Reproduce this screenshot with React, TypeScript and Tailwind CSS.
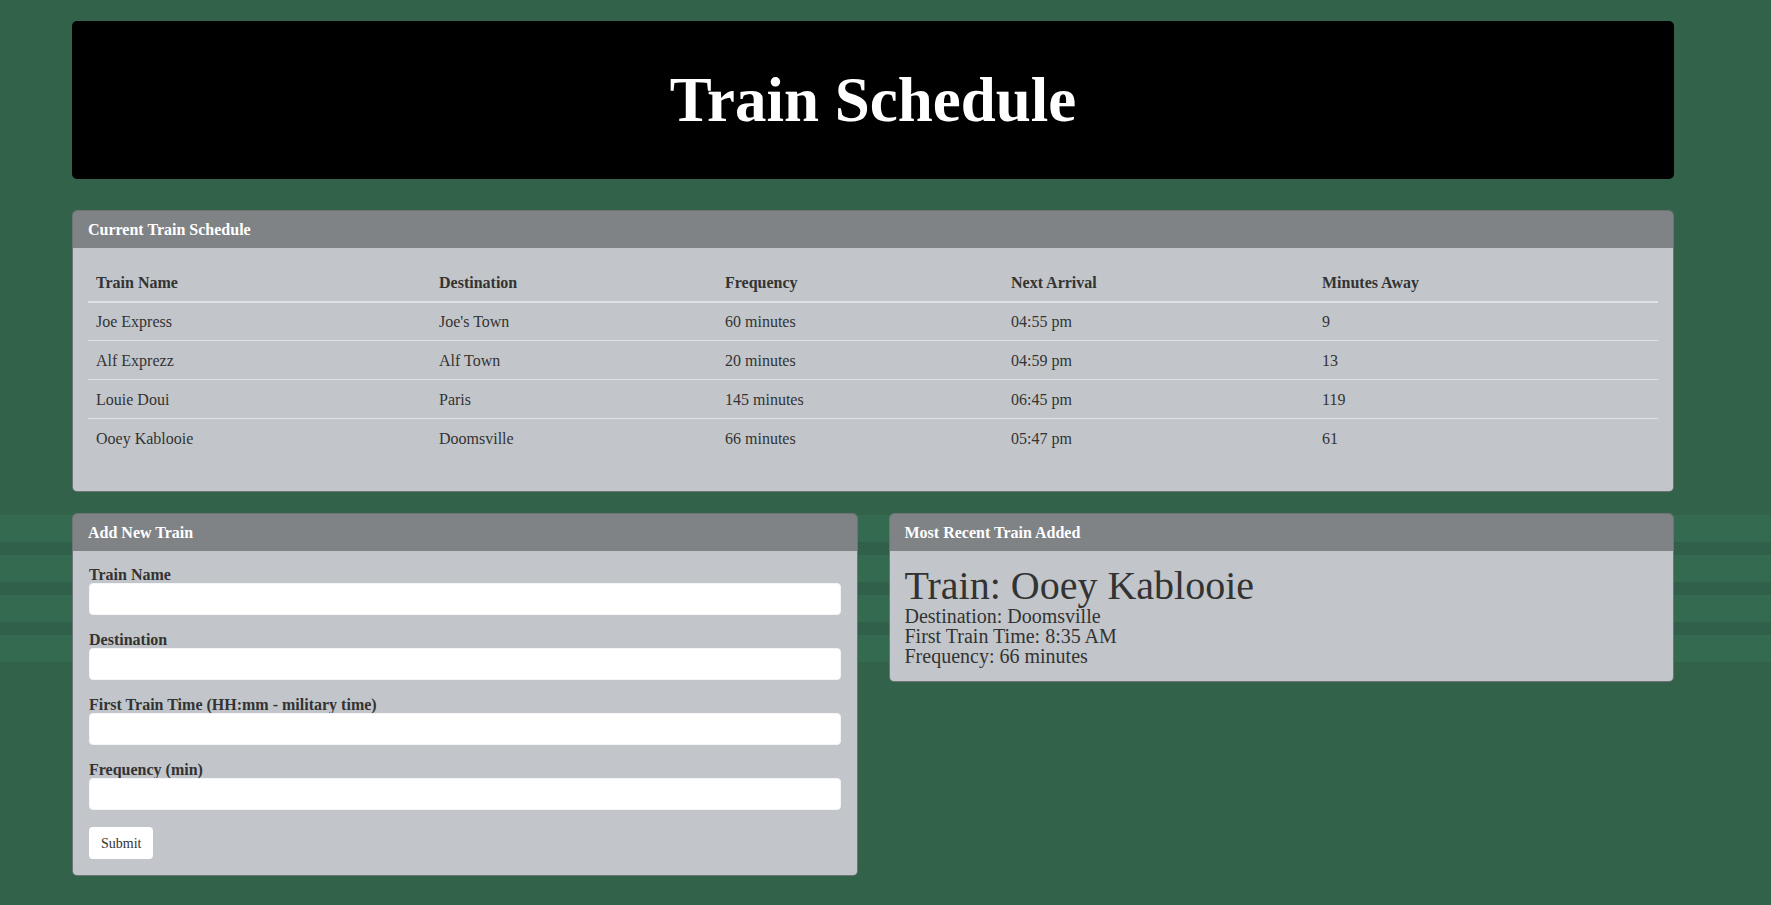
import React from "react";

const rows = [
  ["Joe Express", "Joe's Town", "60 minutes", "04:55 pm", "9"],
  ["Alf Exprezz", "Alf Town", "20 minutes", "04:59 pm", "13"],
  ["Louie Doui", "Paris", "145 minutes", "06:45 pm", "119"],
  ["Ooey Kablooie", "Doomsville", "66 minutes", "05:47 pm", "61"],
];

const fields = [
  "Train Name",
  "Destination",
  "First Train Time (HH:mm - military time)",
  "Frequency (min)",
];

function CardHeader({ title }: { title: string }) {
  return (
    <div className="h-[37px] flex items-center px-[15px] bg-[#7f8386] text-white font-bold text-[16px] leading-none rounded-t-[4px]">
      {title}
    </div>
  );
}

export default function App() {
  return (
    <div
      className="min-h-[905px] bg-[#32634a] bg-[repeating-linear-gradient(180deg,#346b50_0px,#346b50_27px,#30604a_27px,#30604a_40px)] bg-[length:100%_147px] bg-[position:0_515px] bg-no-repeat pl-[72px] pr-[97px] pt-[21px] text-[#333333]"
      style={{ fontFamily: '"Liberation Serif", "Times New Roman", serif' }}
    >
      <div className="h-[158px] bg-black rounded-[5px] flex items-center justify-center">
        <h1 className="text-white font-bold text-[63px] leading-none">Train Schedule</h1>
      </div>

      <div className="mt-[31px] border border-[#6f7376] rounded-[5px] overflow-hidden">
        <CardHeader title="Current Train Schedule" />
        <div className="bg-[#c2c6ca] px-[15px] pt-[16px] pb-[34px]">
          <table className="w-full table-fixed border-collapse text-[16px]">
            <colgroup>
              <col className="w-[343px]" />
              <col className="w-[286px]" />
              <col className="w-[286px]" />
              <col className="w-[311px]" />
              <col />
            </colgroup>
            <thead>
              <tr className="h-[38px] border-b-2 border-[#dee2e6]">
                {["Train Name", "Destination", "Frequency", "Next Arrival", "Minutes Away"].map((h) => (
                  <th key={h} className="text-left font-bold pl-[8px] align-middle">
                    {h}
                  </th>
                ))}
              </tr>
            </thead>
            <tbody>
              {rows.map((r, i) => (
                <tr key={i} className={i === 0 ? "h-[38px]" : "h-[39px] border-t border-[#dee2e6]"}>
                  {r.map((c, j) => (
                    <td key={j} className="pl-[8px] pt-[2px] align-middle">
                      {c}
                    </td>
                  ))}
                </tr>
              ))}
            </tbody>
          </table>
        </div>
      </div>

      <div className="mt-[21px] grid grid-cols-2 gap-[31px] items-start">
        <div className="border border-[#6f7376] rounded-[5px] overflow-hidden">
          <CardHeader title="Add New Train" />
          <div className="bg-[#c2c6ca] px-[16px] pt-[15px] pb-[16px] flex flex-col gap-[16px]">
            {fields.map((f) => (
              <div key={f} className="flex flex-col">
                <label className="font-bold text-[16px] leading-[17px] h-[17px]">{f}</label>
                <input className="h-[32px] bg-white rounded-[4px] border border-[#f4f5f6] outline-none" />
              </div>
            ))}
            <div className="mt-[1px]">
              <button className="h-[32px] px-[12px] bg-white rounded-[4px] text-[14px] text-[#333333]">
                Submit
              </button>
            </div>
          </div>
        </div>

        <div className="border border-[#6f7376] rounded-[5px] overflow-hidden">
          <CardHeader title="Most Recent Train Added" />
          <div className="bg-[#c2c6ca] px-[15px] pt-[15px] pb-[15px]">
            <div className="text-[40px] leading-[40px]">Train: Ooey Kablooie</div>
            <div className="text-[20px] leading-[20px]">Destination: Doomsville</div>
            <div className="text-[20px] leading-[20px]">First Train Time: 8:35 AM</div>
            <div className="text-[20px] leading-[20px]">Frequency: 66 minutes</div>
          </div>
        </div>
      </div>
    </div>
  );
}
